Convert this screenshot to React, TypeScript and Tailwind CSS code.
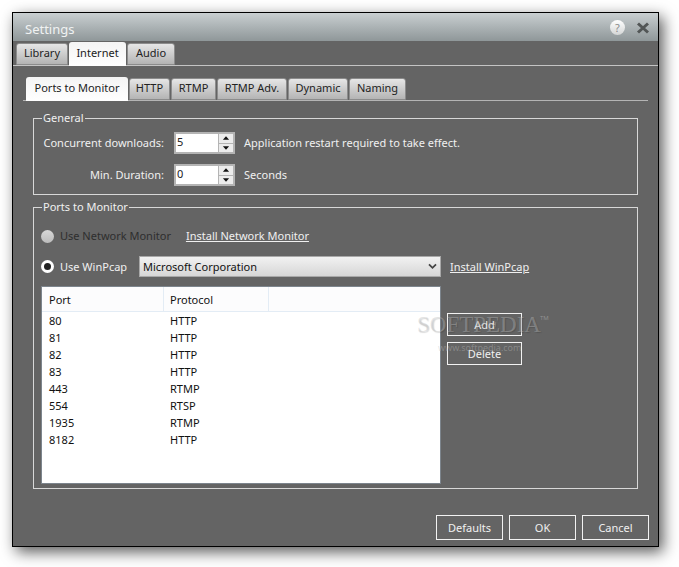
import React from 'react';

const font = { fontFamily: '"Noto Sans", sans-serif' };

const outerTabs = [
  { label: 'Library', w: 'w-[52px]' },
  { label: 'Internet', w: 'w-[57px]' },
  { label: 'Audio', w: 'w-[48px]' },
];
const innerTabs = [
  { label: 'Ports to Monitor', w: 'w-[102px]' },
  { label: 'HTTP', w: 'w-[41px]' },
  { label: 'RTMP', w: 'w-[45px]' },
  { label: 'RTMP Adv.', w: 'w-[70px]' },
  { label: 'Dynamic', w: 'w-[60px]' },
  { label: 'Naming', w: 'w-[57px]' },
];
const ports = [
  ['80', 'HTTP'],
  ['81', 'HTTP'],
  ['82', 'HTTP'],
  ['83', 'HTTP'],
  ['443', 'RTMP'],
  ['554', 'RTSP'],
  ['1935', 'RTMP'],
  ['8182', 'HTTP'],
];

const Spin = ({ value }: { value: string }) => (
  <div className="flex h-[22px] w-[61px] border-2 border-[#b4b4b4] bg-white">
    <span className="flex-1 pl-[1px] leading-[16px] text-[#222]">{value}</span>
    <div className="flex w-[15px] flex-col gap-[1px] bg-[#b4b4b4] pl-[1px]">
      <div className="flex flex-1 items-center bg-[#ececec]">
        <svg viewBox="0 0 14 9" className="h-[8px] w-[14px]"><path d="M3.5 6.5h7L7 2.5z" fill="#111" /></svg>
      </div>
      <div className="flex flex-1 items-center bg-[#ececec]">
        <svg viewBox="0 0 14 9" className="h-[8px] w-[14px]"><path d="M3.5 2.5h7L7 6.5z" fill="#111" /></svg>
      </div>
    </div>
  </div>
);

const OutlineButton = ({ label, className }: { label: string; className: string }) => (
  <button className={`border border-[#f2f2f2] text-[#f0f0f0] ${className}`}>{label}</button>
);

export default function App() {
  return (
    <div className="relative h-[567px] w-[679px] overflow-hidden bg-white p-[12px] text-[11px] leading-[14px]" style={font}>
      <div className="flex h-[535px] w-[647px] flex-col border border-black bg-[#646464] shadow-[4px_5px_14px_rgba(0,0,0,0.65)]">
        {/* Title bar */}
        <div className="flex h-[28px] items-center justify-between bg-gradient-to-b from-[#c9cfd1] to-[#8f9799] pl-[12px] pr-[8px]">
          <span className="pt-[3px] text-[13px] text-[#f0f2f2]">Settings</span>
          <div className="flex items-center gap-[11px] pt-[1px]">
            <span className="flex h-[15px] w-[15px] items-center justify-center rounded-full bg-gradient-to-b from-white to-[#d4d6d6] text-[11px] text-[#8a8a8a]">?</span>
            <svg viewBox="0 0 14 14" className="h-[14px] w-[14px]"><path d="M2 2.5l10 9M12 2.5l-10 9" stroke="#525656" strokeWidth="3" /></svg>
          </div>
        </div>

        {/* Outer tabs */}
        <div className="flex h-[25px] items-end gap-[1px] border-b border-[#c4c4c4] pl-[3px]">
          {outerTabs.map((t) => (
            <div
              key={t.label}
              className={
                t.label === 'Internet'
                  ? `-mb-[1px] flex h-[24px] items-center justify-center rounded-t-[3px] bg-gradient-to-b from-[#f4f4f4] to-white pb-[2px] text-[#222] ${t.w}`
                  : `flex h-[22px] items-center justify-center rounded-t-[3px] border border-[#8c8c8c] bg-gradient-to-b from-[#e6e6e6] to-[#b4b4b4] pb-[3px] text-[#222] ${t.w}`
              }
            >
              {t.label}
            </div>
          ))}
        </div>

        {/* Inner tabs */}
        <div className="mx-[10px] mt-[12px] flex h-[23px] items-end gap-[1px] border-b border-[#b4b4b4] pl-[3px]">
          {innerTabs.map((t, i) => (
            <div
              key={t.label}
              className={
                i === 0
                  ? `-mb-[1px] flex h-[24px] items-center justify-center rounded-t-[3px] bg-gradient-to-b from-[#f4f4f4] to-white pb-[2px] text-[#222] ${t.w}`
                  : `flex h-[22px] items-center justify-center rounded-t-[3px] border border-[#8c8c8c] bg-gradient-to-b from-[#e6e6e6] to-[#b4b4b4] pb-[3px] text-[#222] ${t.w}`
              }
            >
              {t.label}
            </div>
          ))}
        </div>

        {/* General */}
        <fieldset className="mx-[20px] mt-[10px] h-[84px] border border-[#d8d8d8] pl-[8px] text-[#f0f0f0]">
          <legend className="px-[1px] leading-[14px]">General</legend>
          <div className="mt-[7px] flex flex-col gap-[10px]">
            <div className="flex items-center">
              <span className="w-[122px] whitespace-nowrap text-right">Concurrent downloads:</span>
              <div className="ml-[10px]"><Spin value="5" /></div>
              <span className="ml-[9px]">Application restart required to take effect.</span>
            </div>
            <div className="flex items-center">
              <span className="w-[122px] whitespace-nowrap text-right">Min. Duration:</span>
              <div className="ml-[10px]"><Spin value="0" /></div>
              <span className="ml-[9px]">Seconds</span>
            </div>
          </div>
        </fieldset>

        {/* Ports to Monitor */}
        <fieldset className="mx-[20px] mt-[5px] h-[289px] border border-[#d8d8d8] pl-[7px] text-[#f0f0f0]">
          <legend className="ml-[1px] px-[1px] leading-[14px]">Ports to Monitor</legend>
          <div className="mt-[15px] flex h-[14px] items-center">
            <span className="h-[13px] w-[13px] rounded-full bg-gradient-to-b from-[#d8d8d8] to-[#bcbcbc]" />
            <span className="ml-[6px] text-[#2e2e2e]">Use Network Monitor</span>
            <a className="ml-[15px] underline">Install Network Monitor</a>
          </div>
          <div className="mt-[13px] flex items-center">
            <span className="flex h-[13px] w-[13px] items-center justify-center rounded-full bg-white">
              <span className="h-[7px] w-[7px] rounded-full bg-[#222]" />
            </span>
            <span className="ml-[6px] w-[79px]">Use WinPcap</span>
            <div className="flex h-[21px] w-[302px] items-center justify-between border border-[#a8a8a8] bg-gradient-to-b from-[#f2f2f2] to-[#d6d6d6] px-[3px] text-[#111]">
              <span>Microsoft Corporation</span>
              <svg viewBox="0 0 10 8" className="h-[7px] w-[9px]"><path d="M1 1.5l4 4 4-4" fill="none" stroke="#444" strokeWidth="2" /></svg>
            </div>
            <a className="ml-[9px] underline">Install WinPcap</a>
          </div>
          <div className="mt-[9px] flex">
            <div className="h-[198px] w-[400px] border border-[#7d858d] bg-white text-[#111]">
              <div className="flex h-[25px] border-b border-[#e3ecf5] bg-[#fcfcfd]">
                <div className="flex w-[122px] items-center border-r border-[#e3ecf5] pl-[7px] pt-[1px]">Port</div>
                <div className="flex w-[105px] items-center border-r border-[#e3ecf5] pl-[6px] pt-[1px]">Protocol</div>
              </div>
              <div>
                {ports.map(([port, protocol]) => (
                  <div key={port} className="flex h-[17px] items-center">
                    <span className="w-[122px] pl-[7px]">{port}</span>
                    <span className="pl-[6px]">{protocol}</span>
                  </div>
                ))}
              </div>
            </div>
            <div className="ml-[6px] mt-[27px] flex flex-col gap-[6px]">
              <OutlineButton label="Add" className="h-[23px] w-[75px]" />
              <OutlineButton label="Delete" className="h-[23px] w-[75px]" />
            </div>
          </div>
        </fieldset>

        {/* Bottom buttons */}
        <div className="mt-[26px] flex justify-end gap-[6px] pr-[9px]">
          <OutlineButton label="Defaults" className="h-[25px] w-[67px]" />
          <OutlineButton label="OK" className="h-[25px] w-[67px]" />
          <OutlineButton label="Cancel" className="h-[25px] w-[67px]" />
        </div>
      </div>

      {/* Watermark */}
      <div className="pointer-events-none absolute left-[417px] top-[312px] font-['Liberation_Serif'] text-[23px] leading-[26px] text-[#bebebe66] [text-shadow:1px_1px_1px_rgba(0,0,0,0.15)]">SOFTPEDIA</div>
      <div className="pointer-events-none absolute left-[540px] top-[314px] text-[6px] leading-[8px] text-[#bebebe80]">TM</div>
      <div className="pointer-events-none absolute left-[438px] top-[342px] text-[9px] leading-[12px] text-[#bebebe66]">www.softpedia.com</div>
    </div>
  );
}
